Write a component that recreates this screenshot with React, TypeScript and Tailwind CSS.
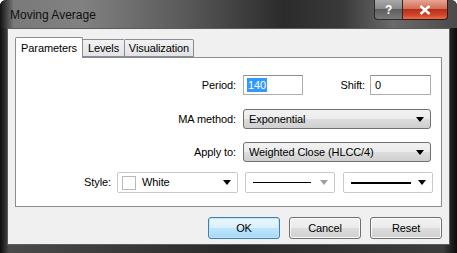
import { ReactNode } from 'react'

const FONT = { fontFamily: '"Liberation Sans", Arial, sans-serif' }

function Arrow({ muted }: { muted?: boolean }) {
  return (
    <svg width="8" height="5" viewBox="0 0 8 5" className="shrink-0">
      <path d="M0 0h8L4 5z" fill={muted ? '#a0a0a0' : '#000'} />
    </svg>
  )
}

function Combo({ children, width }: { children: ReactNode; width: string }) {
  return (
    <div
      className={`${width} h-[20px] flex items-center pl-[5px] pr-[6px] rounded-[3px] border border-[#707070] bg-[linear-gradient(180deg,#f2f2f2_0%,#ebebeb_50%,#dddddd_51%,#cfcfcf_100%)]`}
    >
      <span className="flex-1 truncate">{children}</span>
      <Arrow />
    </div>
  )
}

function FlatCombo({ children, width, muted }: { children: ReactNode; width: string; muted?: boolean }) {
  return (
    <div
      className={`${width} h-[21px] flex items-center pl-[4px] pr-[6px] rounded-[2px] border border-[#c9c9c9] bg-white`}
    >
      <div className="flex-1 flex items-center">{children}</div>
      <Arrow muted={muted} />
    </div>
  )
}

function Button({ label, primary }: { label: string; primary?: boolean }) {
  return (
    <div
      className={`w-[72px] h-[22px] flex items-center justify-center rounded-[3px] border ${
        primary
          ? 'border-[#3c7fb1] bg-[linear-gradient(180deg,#eaf6fd_0%,#d9f0fc_50%,#bee6fd_51%,#a7d9f5_100%)] shadow-[inset_0_0_0_1px_#c4e5f6]'
          : 'border-[#707070] bg-[linear-gradient(180deg,#f2f2f2_0%,#ebebeb_50%,#dddddd_51%,#cfcfcf_100%)] shadow-[inset_0_0_0_1px_#fbfbfb]'
      }`}
    >
      {label}
    </div>
  )
}

export default function App() {
  return (
    <div
      className="w-[457px] h-[253px] text-[11px] tracking-[-0.1px] text-black bg-[linear-gradient(90deg,#0c0c0c_0%,#4a4a4a_2%,#2a2a2a_50%,#3c3c3c_97%,#0c0c0c_100%)] flex flex-col overflow-hidden rounded-t-[6px]"
      style={FONT}
    >
      {/* title bar */}
      <div className="h-[28px] flex items-start shrink-0 bg-[linear-gradient(90deg,#121212_0%,#7a7a7a_3%,#818181_18%,#5a5a5a_40%,#2b2b2b_62%,#3a3a3a_75%,#6a6a6a_86%,#4a4a4a_100%)]">
        <div className="pl-[10px] pt-[6px] text-[12px] tracking-normal text-[#111]">Moving Average</div>
        <div className="flex-1" />
        <div className="flex mr-[9px]">
          <div className="w-[29px] h-[20px] flex items-center justify-center rounded-bl-[4px] border border-t-0 border-[#2a2a2a] bg-[linear-gradient(180deg,#a9a9a9_0%,#8a8a8a_45%,#5e5e5e_50%,#7a7a7a_100%)] text-white font-bold text-[12px]">
            ?
          </div>
          <div className="w-[45px] h-[20px] flex items-center justify-center rounded-br-[4px] border border-t-0 border-l-0 border-[#3a1410] bg-[linear-gradient(180deg,#e8a493_0%,#d0705a_45%,#b63018_50%,#d2462a_80%,#e4704c_100%)]">
            <svg width="12" height="10" viewBox="0 0 12 10">
              <path d="M1.5 1l9 8M10.5 1l-9 8" stroke="#fff" strokeWidth="2.4" />
            </svg>
          </div>
        </div>
      </div>

      {/* client area */}
      <div className="mx-[7px] h-[217px] shrink-0 border border-[#5c5c5c] bg-[#f0f0f0] flex flex-col px-[7px] pt-[8px]">
        {/* tabs */}
        <div className="flex items-end h-[21px] relative z-10">
          <div className="w-[68px] h-[21px] flex items-center justify-center bg-white border border-b-0 border-[#898c95] rounded-t-[2px]">
            Parameters
          </div>
          <div className="w-[42px] h-[18px] mb-[1px] flex items-center justify-center border border-l-0 border-[#898c95] bg-[linear-gradient(180deg,#f2f2f2,#e3e3e3)] rounded-tr-[2px]">
            Levels
          </div>
          <div className="w-[69px] h-[18px] mb-[1px] flex items-center justify-center border border-l-0 border-[#898c95] bg-[linear-gradient(180deg,#f2f2f2,#e3e3e3)] rounded-tr-[2px]">
            Visualization
          </div>
        </div>

        {/* panel */}
        <div className="-mt-[1px] h-[150px] border border-[#898c95] bg-white flex flex-col">
          <div className="flex items-center mt-[17px]">
            <div className="w-[227px] text-right pr-[7px]">Period:</div>
            <div className="w-[60px] h-[20px] border border-[#abadb3] border-t-[#8e8f8f] flex items-center pl-[3px]">
              <span className="bg-[#3399ff] text-white px-[1px] leading-[14px]">140</span>
            </div>
            <div className="w-[67px] text-right pr-[5px]">Shift:</div>
            <div className="w-[61px] h-[20px] border border-[#abadb3] border-t-[#8e8f8f] flex items-center pl-[4px]">
              0
            </div>
          </div>

          <div className="flex items-center mt-[14px]">
            <div className="w-[227px] text-right pr-[7px]">MA method:</div>
            <Combo width="w-[188px]">Exponential</Combo>
          </div>

          <div className="flex items-center mt-[13px]">
            <div className="w-[227px] text-right pr-[7px]">Apply to:</div>
            <Combo width="w-[188px]">Weighted Close (HLCC/4)</Combo>
          </div>

          <div className="flex items-center mt-[10px]">
            <div className="w-[101px] text-right pr-[6px]">Style:</div>
            <FlatCombo width="w-[121px]">
              <div className="w-[14px] h-[14px] border border-[#b8b8b8] bg-white mr-[6px]" />
              White
            </FlatCombo>
            <div className="w-[7px]" />
            <FlatCombo width="w-[90px]" muted>
              <div className="w-[58px] h-[1px] bg-black ml-[3px]" />
            </FlatCombo>
            <div className="w-[8px]" />
            <FlatCombo width="w-[90px]">
              <div className="w-[60px] h-[2px] bg-black ml-[3px]" />
            </FlatCombo>
          </div>
        </div>

        {/* buttons */}
        <div className="flex justify-end gap-[9px] mt-[10px]">
          <Button label="OK" primary />
          <Button label="Cancel" />
          <Button label="Reset" />
        </div>
      </div>
    </div>
  )
}
